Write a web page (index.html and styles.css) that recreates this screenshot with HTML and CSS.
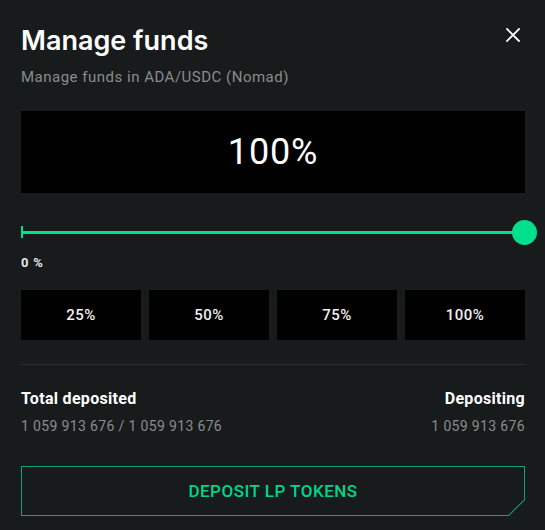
FILE: index.html
```html
<!DOCTYPE html>
<html>
<head>
<meta charset="utf-8">
<link rel="stylesheet" href="styles.css">
</head>
<body>
<div class="modal">
  <div class="header">
    <h1 class="title">Manage funds</h1>
    <button class="close" aria-label="Close">
      <svg width="14" height="14" viewBox="0 0 14 14"><path d="M1 1L13 13M13 1L1 13" stroke="#fff" stroke-width="1.8" stroke-linecap="square"/></svg>
    </button>
  </div>
  <p class="subtitle">Manage funds in ADA/USDC (Nomad)</p>
  <div class="amount">100%</div>
  <div class="slider">
    <span class="tick"></span>
    <span class="track"></span>
    <span class="thumb"></span>
  </div>
  <div class="slider-label">0 %</div>
  <div class="presets">
    <button class="preset">25%</button>
    <button class="preset">50%</button>
    <button class="preset">75%</button>
    <button class="preset">100%</button>
  </div>
  <div class="divider"></div>
  <div class="stats">
    <div class="stat">
      <div class="stat-label">Total deposited</div>
      <div class="stat-value">1 059 913 676 / 1 059 913 676</div>
    </div>
    <div class="stat right">
      <div class="stat-label">Depositing</div>
      <div class="stat-value">1 059 913 676</div>
    </div>
  </div>
  <div class="cta-border">
    <button class="cta">DEPOSIT LP TOKENS</button>
  </div>
</div>
</body>
</html>
```
FILE: styles.css
```css
* { box-sizing: border-box; }
html, body { margin: 0; padding: 0; }
body {
  background: #171b1b;
  font-family: "Roboto", "Liberation Sans", sans-serif;
  color: #fff;
  width: 545px;
  height: 530px;
  overflow: hidden;
}
.modal {
  padding: 24px 20px 0 21px;
}
.header {
  display: flex;
  justify-content: space-between;
  align-items: flex-start;
}
.title {
  margin: 0;
  font-family: "Inter", "Roboto", sans-serif;
  font-weight: 600;
  font-size: 27px;
  line-height: 34px;
  letter-spacing: 0;
}
.close {
  background: none;
  border: 0;
  padding: 0;
  margin: 4px 5px 0 0;
  width: 14px;
  height: 14px;
  display: flex;
  cursor: pointer;
}
.subtitle {
  margin: 10px 0 0;
  font-size: 15px;
  line-height: 18px;
  letter-spacing: 0.5px;
  color: #8a8c8c;
}
.amount {
  margin-top: 25px;
  height: 82px;
  background: #000;
  display: flex;
  align-items: center;
  justify-content: center;
  font-size: 36px;
  font-weight: 400;
  letter-spacing: 0.8px;
}
.slider {
  position: relative;
  margin-top: 27px;
  height: 24px;
  display: flex;
  align-items: center;
}
.tick {
  width: 2px;
  height: 12px;
  background: #00e08c;
}
.track {
  flex: 1;
  height: 3px;
  background: #00e08c;
}
.thumb {
  position: absolute;
  right: -12px;
  top: 0;
  width: 25px;
  height: 25px;
  border-radius: 50%;
  background: #00e08c;
}
.slider-label {
  margin-top: 11px;
  font-size: 13px;
  font-weight: 700;
  line-height: 16px;
  letter-spacing: 0.8px;
  color: #e8e8e8;
}
.presets {
  margin-top: 19px;
  display: grid;
  grid-template-columns: repeat(4, 1fr);
  gap: 8px;
}
.preset {
  height: 50px;
  background: #000;
  border: 0;
  color: #f0f0f0;
  font-family: inherit;
  font-size: 15px;
  font-weight: 500;
  letter-spacing: 0.5px;
}
.divider {
  margin-top: 24px;
  height: 1px;
  background: #2b2f2f;
}
.stats {
  margin-top: 24px;
  display: flex;
  justify-content: space-between;
}
.stat-label {
  font-size: 16px;
  font-weight: 700;
  line-height: 20px;
  letter-spacing: 0.3px;
}
.stat-value {
  margin-top: 8px;
  font-size: 14px;
  line-height: 18px;
  letter-spacing: 0.35px;
  color: #8a8c8c;
}
.right { text-align: right; }
.cta-border {
  margin-top: 31px;
  padding: 1px;
  background: #14a36c;
  clip-path: polygon(0 0, 100% 0, 100% calc(100% - 16px), calc(100% - 16px) 100%, 0 100%);
}
.cta {
  display: block;
  width: 100%;
  height: 48px;
  border: 0;
  background: #171b1b;
  color: #00d68a;
  font-family: inherit;
  font-size: 17px;
  font-weight: 500;
  letter-spacing: 0.5px;
  clip-path: polygon(0 0, 100% 0, 100% calc(100% - 15.5px), calc(100% - 15.5px) 100%, 0 100%);
}
```
